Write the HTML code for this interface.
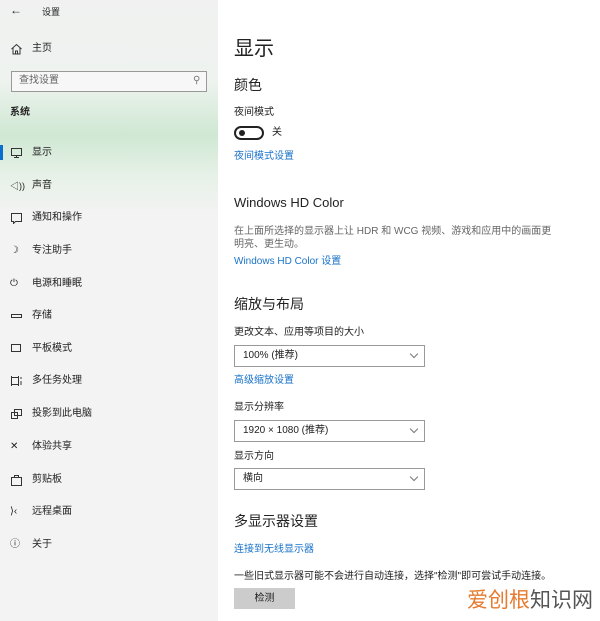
<!DOCTYPE html><html><head><meta charset="utf-8"><style>
*{margin:0;padding:0;box-sizing:border-box}
body{width:600px;height:621px;position:relative;overflow:hidden;font-family:"Liberation Sans","Noto Sans CJK SC",sans-serif;color:#222;background:#fff}
.side{position:absolute;left:0;top:0;width:218px;height:621px;background:linear-gradient(180deg,#f1f1f1 0,#eef3ef 80px,#cfe8d3 135px,#e6f1e7 175px,#f3f3f3 215px,#f3f3f3 100%)}
.a{position:absolute;font-size:10px;line-height:12px;white-space:nowrap}
.ic{position:absolute;left:10px;width:13px;height:12px}
.link{color:#1a73c8}
.dd{position:absolute;left:234px;width:191px;height:22px;border:1px solid #999;background:#fff;font-size:10px;padding-left:8px;line-height:20px}
.dd:after{content:"";position:absolute;right:7px;top:5px;width:5px;height:5px;border-right:1px solid #777;border-bottom:1px solid #777;transform:rotate(45deg)}
</style></head><body>
<div class="side"></div>
<div class="a" style="left:10px;top:4px;font-size:12px">←</div>
<div class="a" style="left:42px;top:6px;font-size:9px">设置</div>
<svg class="ic" style="top:43px" viewBox="0 0 13 12"><path d="M1.5 6L6.5 1.5 11.5 6M3 5v6h7V5M5.5 11V8h2v3" fill="none" stroke="#333"/></svg>
<div class="a" style="left:32px;top:43px">主页</div>
<div style="position:absolute;left:11px;top:71px;width:196px;height:21px;border:1px solid #999;background:#f7f7f7"></div>
<div class="a" style="left:19px;top:75px;color:#666">查找设置</div>
<div class="a" style="left:193px;top:75px;color:#777">⚲</div>
<div class="a" style="left:10px;top:107px;font-weight:bold">系统</div>
<div style="position:absolute;left:0;top:145px;width:3px;height:15px;background:#0a6fd0"></div>
<svg class="ic" style="top:147px" viewBox="0 0 13 12"><path d="M1.5 1.5h10v7h-10zM6.5 8.5v2M4 10.5h5" fill="none" stroke="#333"/></svg>
<div class="a" style="left:32px;top:147px">显示</div>
<div class="a ic" style="top:180px;font-size:9px">◁))</div><div class="a" style="left:32px;top:180px">声音</div>
<svg class="ic" style="top:212px" viewBox="0 0 13 12"><path d="M1.5 1.5h10v8h-6l-2 2v-2h-2z" fill="none" stroke="#333"/></svg><div class="a" style="left:32px;top:212px">通知和操作</div>
<div class="a ic" style="top:245px">☽</div><div class="a" style="left:32px;top:245px">专注助手</div>
<div class="a ic" style="top:278px">⏻</div><div class="a" style="left:32px;top:278px">电源和睡眠</div>
<svg class="ic" style="top:310px" viewBox="0 0 13 12"><path d="M1.5 4.5h10v3h-10z" fill="none" stroke="#333"/></svg><div class="a" style="left:32px;top:310px">存储</div>
<svg class="ic" style="top:343px" viewBox="0 0 13 12"><path d="M1.5 1.5h9v7h-9z" fill="none" stroke="#333"/></svg><div class="a" style="left:32px;top:343px">平板模式</div>
<svg class="ic" style="top:375px" viewBox="0 0 13 12"><path d="M1.5 1v10M1.5 2.5h7M1.5 9.5h7M8.5 1v10M11 2v2M11 6v4" fill="none" stroke="#333"/></svg><div class="a" style="left:32px;top:375px">多任务处理</div>
<svg class="ic" style="top:408px" viewBox="0 0 13 12"><path d="M4.5 1.5h7v6h-7zM1.5 4.5h6v6h-6z" fill="none" stroke="#333"/></svg><div class="a" style="left:32px;top:408px">投影到此电脑</div>
<div class="a ic" style="top:441px">✕</div><div class="a" style="left:32px;top:441px">体验共享</div>
<svg class="ic" style="top:474px" viewBox="0 0 13 12"><path d="M1.5 3.5h10v8h-10zM4.5 3.5v-2h4v2" fill="none" stroke="#333"/></svg><div class="a" style="left:32px;top:474px">剪贴板</div>
<div class="a ic" style="top:506px">⟩‹</div><div class="a" style="left:32px;top:506px">远程桌面</div>
<div class="a ic" style="top:539px">ⓘ</div><div class="a" style="left:32px;top:539px">关于</div>

<div class="a" style="left:234px;top:38px;font-size:20px;line-height:22px">显示</div>
<div class="a" style="left:234px;top:77px;font-size:14px;line-height:16px">颜色</div>
<div class="a" style="left:234px;top:107px">夜间模式</div>
<div style="position:absolute;left:234px;top:126px;width:30px;height:14px;border:2px solid #222;border-radius:7px"></div>
<div style="position:absolute;left:239px;top:130px;width:6px;height:6px;border-radius:50%;background:#222"></div>
<div class="a" style="left:272px;top:127px">关</div>
<div class="a link" style="left:234px;top:151px">夜间模式设置</div>
<div class="a" style="left:234px;top:195px;font-size:13px;line-height:16px">Windows HD Color</div>
<div class="a" style="left:234px;top:226px;color:#666">在上面所选择的显示器上让 HDR 和 WCG 视频、游戏和应用中的画面更</div>
<div class="a" style="left:234px;top:239px;color:#666">明亮、更生动。</div>
<div class="a link" style="left:234px;top:256px">Windows HD Color 设置</div>
<div class="a" style="left:234px;top:296px;font-size:14px;line-height:16px">缩放与布局</div>
<div class="a" style="left:234px;top:327px">更改文本、应用等项目的大小</div>
<div class="dd" style="top:345px">100% (推荐)</div>
<div class="a link" style="left:234px;top:375px">高级缩放设置</div>
<div class="a" style="left:234px;top:402px">显示分辨率</div>
<div class="dd" style="top:420px">1920 × 1080 (推荐)</div>
<div class="a" style="left:234px;top:451px">显示方向</div>
<div class="dd" style="top:468px">横向</div>
<div class="a" style="left:234px;top:513px;font-size:14px;line-height:16px">多显示器设置</div>
<div class="a link" style="left:234px;top:544px">连接到无线显示器</div>
<div class="a" style="left:234px;top:571px">一些旧式显示器可能不会进行自动连接，选择"检测"即可尝试手动连接。</div>
<div style="position:absolute;left:234px;top:588px;width:61px;height:21px;background:#ccc;font-size:10px;text-align:center;line-height:21px">检测</div>
<div class="a" style="left:467px;top:589px;font-size:21px;line-height:24px"><span style="color:#e67a2e">爱创根</span><span style="color:#555">知识网</span></div>
</body></html>
